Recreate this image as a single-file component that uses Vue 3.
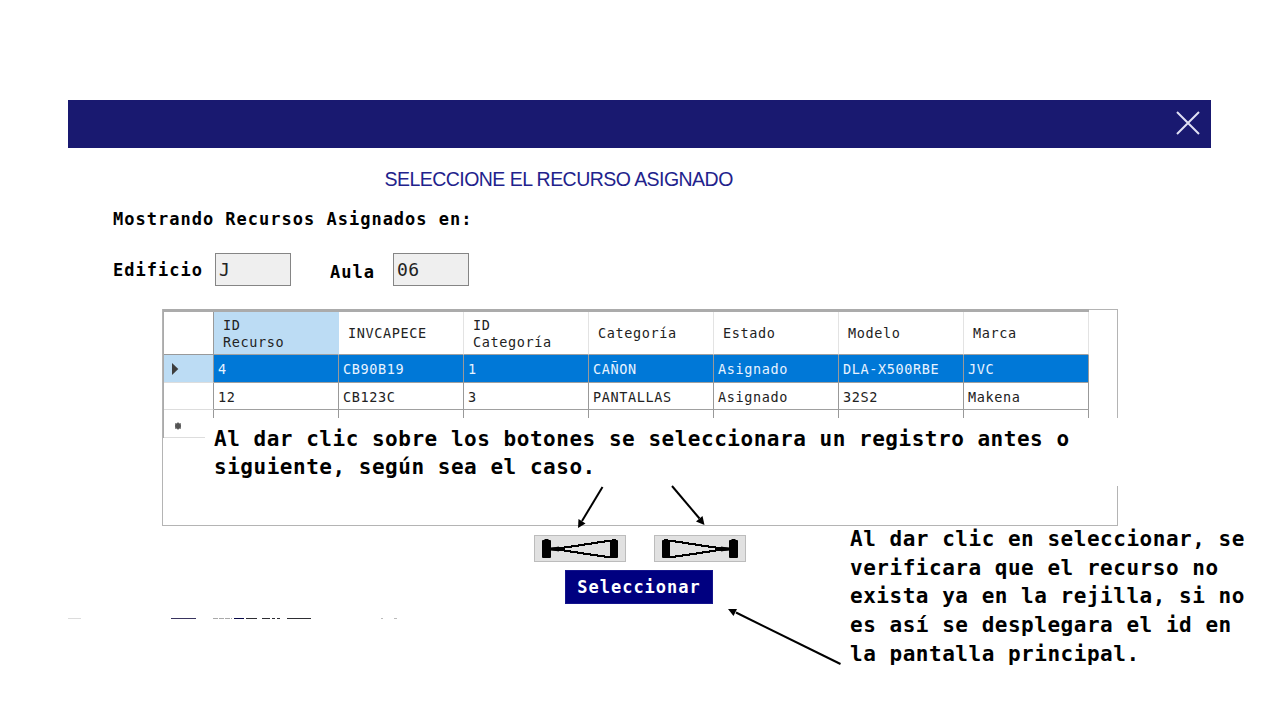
<script setup>
const columns = ['ID\nRecurso', 'INVCAPECE', 'ID\nCategoría', 'Categoría', 'Estado', 'Modelo', 'Marca']
const rows = [
  ['4', 'CB90B19', '1', 'CAÑON', 'Asignado', 'DLA-X500RBE', 'JVC'],
  ['12', 'CB123C', '3', 'PANTALLAS', 'Asignado', '32S2', 'Makena'],
]
const steps = ['previous', 'next']
const noteButtons = [
  'Al dar clic sobre los botones se seleccionara un registro antes o',
  'siguiente, según sea el caso.',
]
const noteSelect = [
  'Al dar clic en seleccionar, se',
  'verificara que el recurso no',
  'exista ya en la rejilla, si no',
  'es así se desplegara el id en',
  'la pantalla principal.',
]
</script>

<template>
  <div class="page">
    <main class="dialog">
      <header class="titlebar">
        <svg class="close" width="26" height="26" viewBox="0 0 26 26">
          <path d="M2 2L24 24M24 2L2 24" stroke="#e0e0f4" stroke-width="2" fill="none" />
        </svg>
      </header>
      <h1 class="heading"><span>SELECCIONE EL RECURSO ASIGNADO</span></h1>
      <p class="label showing">Mostrando Recursos Asignados en:</p>
      <div class="fields">
        <span class="label edificio">Edificio</span>
        <span class="box">J</span>
        <span class="label aula">Aula</span>
        <span class="box">06</span>
      </div>

      <section class="gridview">
        <div class="sheet">
          <div class="row head">
            <div class="handle"></div>
            <div v-for="(c, i) in columns" :key="i" class="cell" :class="{ active: i === 0 }">{{ c }}</div>
          </div>
          <div v-for="(r, i) in rows" :key="i" class="row" :class="{ selected: i === 0 }">
            <div class="handle">
              <svg v-if="i === 0" width="8" height="12" viewBox="0 0 8 12"><path d="M1 0L7.300 6L1 12Z" fill="#3d3d3d" /></svg>
            </div>
            <div v-for="(v, j) in r" :key="j" class="cell">{{ v }}</div>
          </div>
          <div class="row blank">
            <div class="handle">
              <svg width="8" height="8" viewBox="0 0 8 8"><circle cx="4" cy="4" r="3" fill="#555" /><path d="M4 .3V7.700M1 1.500L7 6.500M7 1.500L1 6.500" stroke="#555" /></svg>
            </div>
            <div v-for="n in 7" :key="n" class="cell"></div>
          </div>
        </div>
      </section>

      <div class="nav">
        <button v-for="s in steps" :key="s" class="step">
          <svg :class="{ flip: s === 'next' }" width="92" height="27" viewBox="0 0 92 27">
            <path d="M17 14L25 12.500M24 13H31M30 12H38M37 11H45M44 10H51M50 9H58M57 8H64M63 7H71M70 6H78M17 14L25 15.500M24 15H31M30 16H37M36 17H44M43 18H50M49 19H57M56 20H64M63 21H71M70 22H78" fill="none" stroke="#000" stroke-width="1.900" />
            <path d="M16 12.500L27 12V16L16 15.500Z" />
            <rect x="8" y="5" width="9" height="18" rx="1" /><rect x="10.500" y="4" width="4" height="3" />
            <rect x="76" y="5" width="8" height="18" rx="1" /><rect x="78" y="4" width="4" height="3" />
          </svg>
        </button>
      </div>
      <button class="select">Seleccionar</button>
      <svg class="fringe" width="400" height="3" viewBox="0 0 400 3">
        <path d="M0 .5H13" stroke="#dcdcdc" />
        <path d="M103 .5H128" stroke="#39345f" />
        <path d="M145 .5H164" stroke="#aaa" stroke-dasharray="5 1" />
        <path d="M166 .5H176" stroke="#080848" />
        <path d="M178 .5H189M194 .5H202M204 .5H207M209 .5H212M219 .5H243" stroke="#2e2e33" />
        <path d="M313 .5H315M326 .5H329" stroke="#bbb" />
      </svg>
    </main>

    <aside class="note note-buttons"><div v-for="t in noteButtons" :key="t">{{ t }}</div></aside>
    <aside class="note note-select"><div v-for="t in noteSelect" :key="t">{{ t }}</div></aside>
    <svg class="arrows" width="1280" height="720" viewBox="0 0 1280 720">
      <g stroke="#000" stroke-width="2">
        <path d="M602.500 487L582 521" /><path d="M672 486L699.500 518.500" /><path d="M840.500 664L736 612.500" />
      </g>
      <path d="M578 528L578.500 519L585.500 523.500Z" />
      <path d="M704.500 525L696 521.500L702.500 516Z" />
      <path d="M728 609L737 609L733.500 616Z" />
    </svg>
  </div>
</template>

<style>
body { background: #fff; }
</style>

<style scoped>
.page { position: relative; width: 1280px; height: 720px; overflow: hidden; background: #fff; box-sizing: border-box; padding: 100px 0 0 68px; font-family: "DejaVu Sans Mono", monospace; color: #000; }
.dialog { width: 1143px; display: flex; flex-direction: column; align-items: flex-start; }
.titlebar { width: 100%; height: 48px; background: #191970; display: flex; justify-content: flex-end; box-sizing: border-box; padding: 10px 10px 0 0; }
.heading { margin: 19px 0 0 316.5px; height: 24px; font: 400 19.5px/24px "Liberation Sans", Arial, sans-serif; letter-spacing: -0.54px; color: #22228c; white-space: nowrap; }
.label { font-weight: 700; font-size: 17px; letter-spacing: 1px; line-height: 24px; white-space: nowrap; }
.showing { margin: 16px 0 0 45px; }
.fields { display: flex; height: 33px; margin: 22px 0 0 45px; }
.edificio { width: 102px; padding-top: 5px; }
.aula { margin-left: 39px; width: 63px; padding-top: 7px; }
.box { width: 76px; height: 33px; box-sizing: border-box; border: 1px solid #858585; background: #efefef; padding-left: 3px; font-size: 18px; line-height: 31px; letter-spacing: 0.4px; color: #222; }
.gridview { width: 956px; height: 217px; box-sizing: border-box; margin: 23px 0 0 94px; border: 1px solid #b4b4b4; }
.sheet { width: 926px; border-top: 3px solid #ababab; border-left: 1px solid #aaa; height: 129px; margin-top: -1px; box-sizing: border-box; }
.row { display: flex; height: 27px; font-size: 13.5px; letter-spacing: 0.61px; color: #222; }
.handle { width: 50px; height: 100%; box-sizing: border-box; border-right: 1px solid #999; border-bottom: 1px solid #ddd; display: flex; align-items: center; padding-left: 7px; flex: none; }
.cell { width: 125px; height: 100%; box-sizing: border-box; border-right: 1px solid #999; border-bottom: 1px solid #a0a0a0; padding-left: 4px; line-height: 28px; white-space: pre; flex: none; }
.head { height: 43px; }
.head .handle { border-bottom-color: #999; }
.head .cell { padding: 2px 0 0 9px; line-height: 17.5px; border-right-color: #e3e3e3; display: flex; align-items: center; }
.head .active { background: #bcdcf4; border-right-color: #bcdcf4; }
.selected { height: 28px; }
.selected .cell { background: #0078d7; color: #e8f3ff; line-height: 29px; }
.selected .handle { background: #bcdcf4; padding-top: 1px; }
.blank { height: 28px; }
.blank .handle { padding: 4px 0 0 10px; }
.nav { display: flex; gap: 28px; margin: 9px 0 0 466px; }
.step { width: 92px; height: 27px; padding: 0; box-sizing: border-box; border: 1px solid #bcbcbc; background: #e1e1e1; }
.step svg { display: block; margin: -1px; }
.step .flip { transform: scaleX(-1); }
.select { width: 148px; height: 34px; margin: 8px 0 0 497px; padding: 1px 0 0; border: 1px solid #14148c; background: #000080; color: #fff; font: 700 17px/31px "DejaVu Sans Mono", monospace; letter-spacing: 1px; }
.fringe { display: block; margin-top: 14px; }
.note { position: absolute; font-weight: 700; font-size: 21px; letter-spacing: 0.52px; line-height: 28.7px; white-space: pre; }
.note-buttons { left: 205px; top: 418px; width: 925px; height: 68px; box-sizing: border-box; padding: 7px 0 0 9px; background: #fff; line-height: 28px; }
.note-select { left: 850px; top: 525px; }
.arrows { position: absolute; left: 0; top: 0; }
</style>
